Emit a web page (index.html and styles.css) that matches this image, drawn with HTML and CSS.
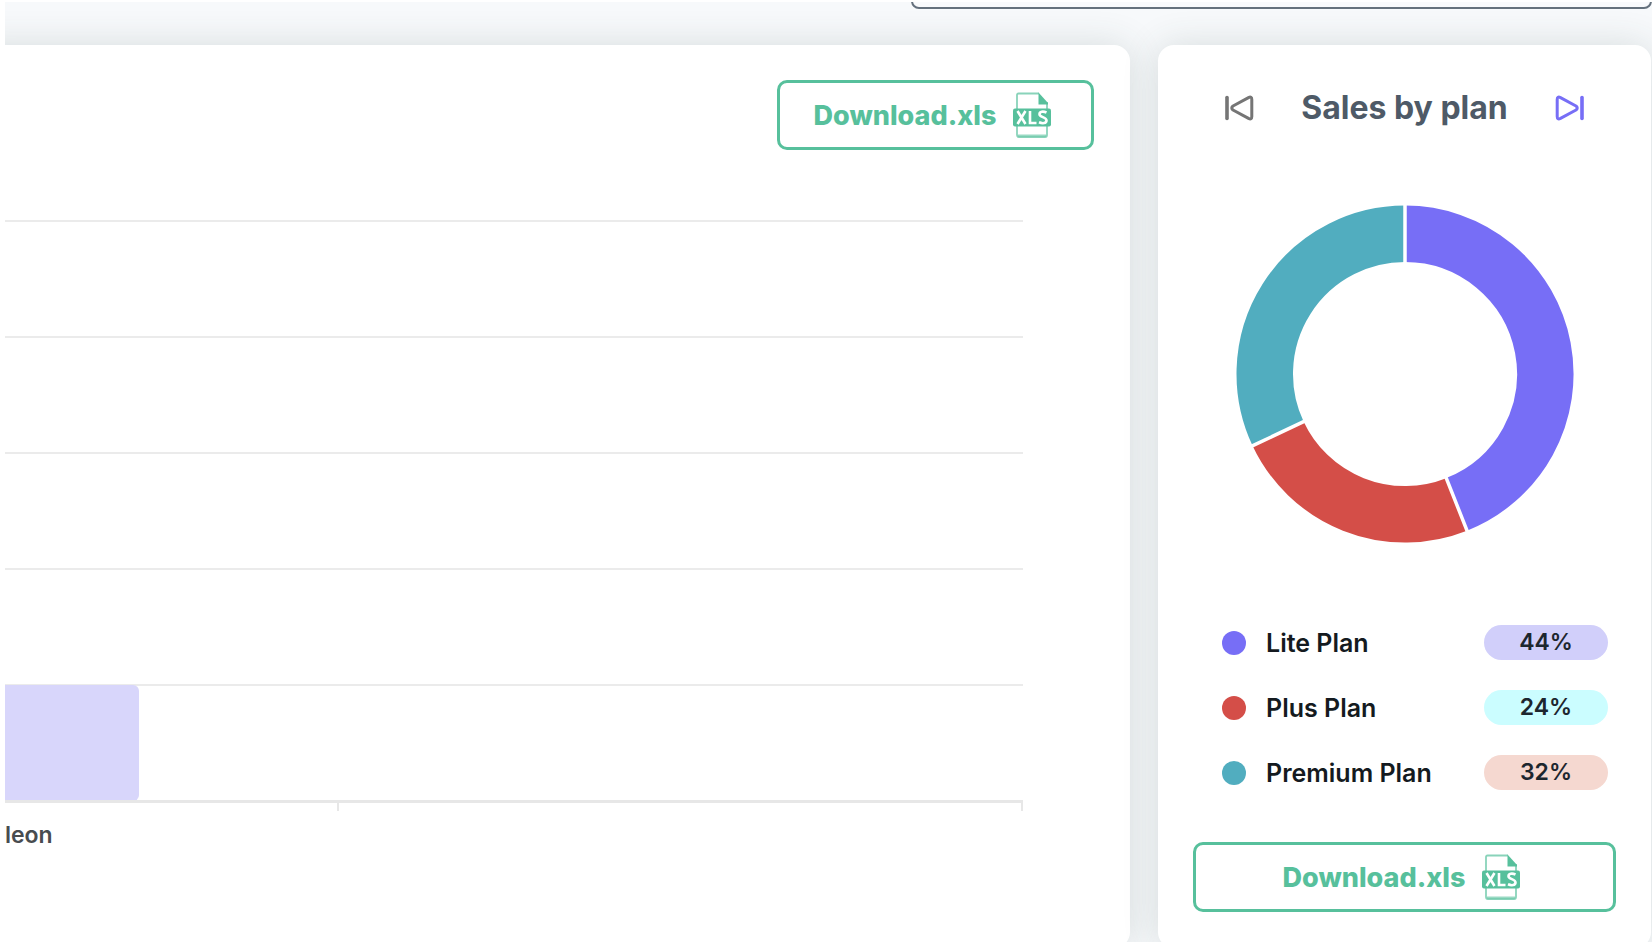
FILE: index.html
```html
<!DOCTYPE html>
<html lang="en">
<head>
<meta charset="utf-8">
<meta name="viewport" content="width=device-width, initial-scale=1">
<title>Sales by plan</title>
<link rel="stylesheet" href="styles.css">
</head>
<body>
<svg class="sprite" aria-hidden="true">
  <symbol id="xls" viewBox="0 0 38 46">
    <path d="M26 1.500H5.500Q4 1.500 4 3V43Q4 45 6 45H32Q34 45 34 43V10" fill="none" stroke="currentColor" stroke-width="1.800" opacity=".7"/>
    <path d="M25.500 0.500L35 11V12.500H25.500Z" fill="currentColor"/>
    <path d="M5 43.500H33" stroke="currentColor" stroke-width="2" opacity=".6"/>
    <rect x="0" y="16.500" width="38" height="18" rx="2" fill="currentColor"/>
    <g fill="none" stroke="#fff" stroke-width="2.600">
      <path d="M4.500 19L12.500 32M12.500 19L4.500 32M17 19V31H23.500"/>
      <path d="M33.500 20.500C30 19 26.500 19.500 26.500 22.200C26.500 25.500 33.500 24.800 33.500 28.500C33.500 31.500 29.500 31.800 26 30.300"/>
    </g>
  </symbol>
  <symbol id="skip" viewBox="0 0 30 26">
    <path d="M2.200 4.500V21.500Q2.200 25 5.500 23.400L21 15Q23.500 13 21 11L5.500 2.600Q2.200 1 2.200 4.500Z" fill="none" stroke="currentColor" stroke-width="3" stroke-linejoin="round"/>
    <path d="M27 2.500V23.500" stroke="currentColor" stroke-width="3.600" stroke-linecap="round"/>
  </symbol>
</svg>
<div class="page">
  <header class="topbar"><input class="search" type="text" aria-label="Search"></header>
  <main class="cards">
    <section class="card chart-card" aria-label="Sales chart">
      <div class="toolbar">
        <button class="download" type="button">Download.xls<svg class="xls"><use href="#xls"/></svg></button>
      </div>
      <div class="plot">
        <div class="band"></div>
        <div class="band"></div>
        <div class="band"></div>
        <div class="band"></div>
        <div class="band"><div class="bar" style="width:13.2%"></div></div>
        <div class="axis"><span class="tick first"></span><span class="tick"></span></div>
        <div class="label">leon</div>
      </div>
    </section>
    <section class="card plan-card">
      <div class="heading">
        <button class="nav prev" type="button" aria-label="Previous"><svg><use href="#skip"/></svg></button>
        <h2>Sales by plan</h2>
        <button class="nav next" type="button" aria-label="Next"><svg><use href="#skip"/></svg></button>
      </div>
      <svg class="donut" viewBox="-169 -169 338 338" role="img" aria-label="Lite 44%, Plus 24%, Premium 32%">
        <g fill="none" stroke-width="56.500">
          <path stroke="#776ef6" d="M0 -140.200A140.200 140.200 0 0 1 51.600 130.400"/>
          <path stroke="#d44e48" d="M51.600 130.400A140.200 140.200 0 0 1 -126.900 59.700"/>
          <path stroke="#51adbf" d="M-126.900 59.700A140.200 140.200 0 0 1 0 -140.200"/>
        </g>
        <path stroke="#fff" stroke-width="3.500" d="M0 -105V-170M38.700 97.600L62.600 158.100M-95 44.700L-153.800 72.400"/>
      </svg>
      <ul class="legend">
        <li><span class="dot lite"></span><span class="name">Lite Plan</span><span class="pill lite-pill">44%</span></li>
        <li><span class="dot plus"></span><span class="name">Plus Plan</span><span class="pill plus-pill">24%</span></li>
        <li><span class="dot premium"></span><span class="name">Premium Plan</span><span class="pill premium-pill">32%</span></li>
      </ul>
      <button class="download wide" type="button">Download.xls<svg class="xls"><use href="#xls"/></svg></button>
    </section>
  </main>
</div>
</body>
</html>
```
FILE: styles.css
```css
* { box-sizing: border-box; }
body {
  margin: 0;
  padding: 2px 0 0 5px;
  height: 100vh;
  overflow: hidden;
  background: #fff;
  font-family: Inter, "Liberation Sans", sans-serif;
}
.sprite { position: absolute; width: 0; height: 0; }
.page { background: #f7f9fb; overflow: hidden; }
.topbar {
  display: flex;
  justify-content: flex-end;
  align-items: flex-end;
  height: 7px;
}
.search {
  width: 45%;
  height: 48px;
  flex: none;
  border: 2px solid #65717d;
  border-radius: 8px;
  background: #f9fafc;
}
.cards {
  display: grid;
  grid-template-columns: 1125fr 493fr;
  gap: 28px;
  padding: 36px 1px 24px 0;
}
.card {
  min-width: 0;
  background: #fff;
  border-radius: 16px;
  box-shadow: 0 0 36px rgba(50, 75, 70, 0.16);
}
.chart-card {
  margin-left: -40px;
  padding: 35px 36px 0 40px;
}
.toolbar { display: flex; justify-content: flex-end; }
.download {
  display: flex;
  align-items: center;
  justify-content: center;
  gap: 17px;
  width: 317px;
  height: 70px;
  padding: 0 6px 0 0;
  border: 3px solid #57c09c;
  border-radius: 10px;
  background: #fff;
  color: #57c09c;
  font: 800 27px Inter, "Liberation Sans", sans-serif;
}
.download.wide { width: 100%; }
.xls { width: 38px; height: 46px; }
.plot { margin: 70px 71px 0 0; }
.band {
  height: 116px;
  border-top: 2px solid #ebebeb;
}
.bar {
  height: 116px;
  margin-top: -1px;
  border-radius: 0 6px 6px 0;
  background: #d8d6fb;
}
.axis {
  display: flex;
  height: 11px;
  border-top: 3px solid #e7e7e7;
}
.tick { flex: 1; border-right: 2px solid #e7e7e7; }
.tick.first { flex: 0 0 calc(33% - 2px); }
.label {
  margin-top: 8px;
  color: #484c50;
  font-size: 23px;
  font-weight: 600;
  line-height: 32px;
}
.plan-card { padding: 36px 35px; }
.heading {
  display: flex;
  align-items: center;
  justify-content: space-between;
  height: 54px;
  padding: 0 31px;
}
.heading h2 {
  margin: 0;
  color: #4e5a67;
  font-size: 32px;
  font-weight: 700;
  line-height: 40px;
  white-space: nowrap;
}
.nav {
  display: flex;
  padding: 0;
  border: 0;
  background: none;
  color: #776ef6;
}
.nav svg { width: 30px; height: 26px; }
.prev { color: #757575; transform: scaleX(-1); }
.donut { display: block; width: 338px; height: 338px; margin: 70px auto 0; }
.legend {
  display: grid;
  gap: 30px;
  margin: 82px 0 0;
  padding: 0 8px 0 29px;
  list-style: none;
}
.legend li { display: flex; align-items: center; height: 35px; }
.dot { width: 24px; height: 24px; border-radius: 50%; }
.lite { background: #776ef6; }
.plus { background: #d44e48; }
.premium { background: #51adbf; }
.name {
  flex: 1;
  margin-left: 20px;
  color: #141a20;
  font-size: 25px;
  font-weight: 600;
  line-height: 28px;
  white-space: nowrap;
}
.pill {
  width: 124px;
  border-radius: 18px;
  color: #1d262e;
  font-size: 23px;
  font-weight: 600;
  line-height: 35px;
  text-align: center;
}
.lite-pill { background: #d1cffa; }
.plus-pill { background: #cbfdff; }
.premium-pill { background: #f5d8d0; }
.plan-card .download { margin-top: 52px; }
```
